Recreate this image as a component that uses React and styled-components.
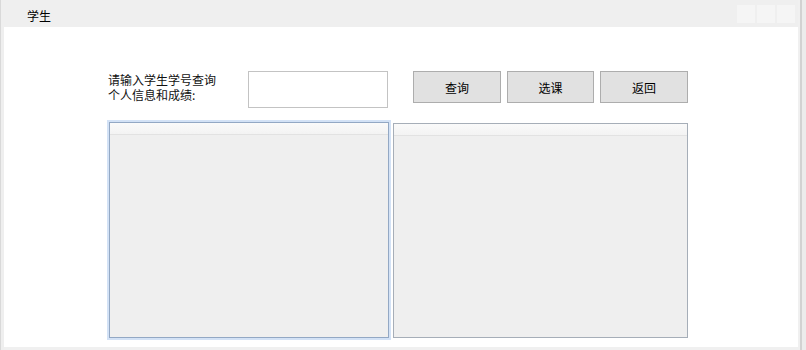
import React, { useState } from 'react';
import styled, { createGlobalStyle } from 'styled-components';

const GlobalStyle = createGlobalStyle`
  html, body {
    margin: 0;
    padding: 0;
    background: #f0f0f0;
    font-family: 'Noto Sans CJK SC', 'Noto Sans', sans-serif;
    font-size: 12px;
    color: #000;
  }
`;

const Window = styled.div`
  display: flex;
  width: 806px;
  height: 350px;
  overflow: hidden;
`;

const LeftEdge = styled.div`
  width: 4px;
  flex-shrink: 0;
  background: linear-gradient(to right, #d9d9d9 0 1px, #efefef 1px);
`;

const RightEdge = styled.div`
  width: 8px;
  flex-shrink: 0;
  background: linear-gradient(to right, #f0f0f0 0 2px, #d2d2d2 2px 4px, #ececec 4px);
`;

const Main = styled.div`
  flex: 1;
  display: flex;
  flex-direction: column;
`;

const TitleBar = styled.div`
  height: 27px;
  display: flex;
  align-items: flex-start;
  justify-content: space-between;
  background: #efefef;
  padding: 0 3px 0 23px;
`;

const Title = styled.span`
  padding-top: 7px;
  line-height: 17px;
  font-size: 12px;
`;

const Controls = styled.div`
  display: flex;
  gap: 2px;
  padding-top: 5px;
`;

const ControlBox = styled.div`
  width: 18px;
  height: 18px;
  background: #f5f5f5;
`;

const Content = styled.div`
  flex: 1;
  background: #fff;
  display: flex;
  flex-direction: column;
  padding: 44px 0 0 104px;
`;

const BottomEdge = styled.div`
  height: 3px;
  background: #f0f0f0;
`;

const TopRow = styled.div`
  display: flex;
  align-items: flex-start;
`;

const Label = styled.div`
  width: 140px;
  padding-top: 1px;
  line-height: 15px;
  font-size: 12px;
  color: #111;
`;

const TextBox = styled.input`
  box-sizing: border-box;
  width: 140px;
  height: 37px;
  border: 1px solid #c3c3c3;
  background: #fff;
  outline: none;
  margin: 0 25px 0 0;
  padding: 0 4px;
  font-family: inherit;
  font-size: 12px;
`;

const ButtonGroup = styled.div`
  display: flex;
  gap: 6px;
`;

const Button = styled.button`
  box-sizing: border-box;
  width: ${(p) => p.w || 88}px;
  height: 32px;
  margin: 0;
  padding: 0;
  background: #e1e1e1;
  border: 1px solid #adadad;
  font-family: inherit;
  font-size: 12px;
  color: #000;
`;

const Panels = styled.div`
  display: flex;
  align-items: flex-start;
  gap: 4px;
  margin-top: 14px;
  padding-left: 1px;
`;

const Panel = styled.div`
  box-sizing: border-box;
  width: ${(p) => p.w}px;
  height: ${(p) => p.h}px;
  margin-top: ${(p) => p.top || 0}px;
  background: #efefef;
  border: 1px solid ${(p) => (p.focused ? '#93a8c4' : '#a6aeb8')};
  box-shadow: ${(p) => (p.focused ? '0 0 0 2px #d3e2f6' : 'none')};
  display: flex;
  flex-direction: column;
`;

const PanelHeader = styled.div`
  height: 11px;
  background: linear-gradient(#fafafa, #f3f3f3);
  border-bottom: 1px solid #e2e2e2;
`;

export default function App() {
  const [id, setId] = useState('');

  return (
    <>
      <GlobalStyle />
      <Window>
        <LeftEdge />
        <Main>
          <TitleBar>
            <Title>学生</Title>
            <Controls>
              <ControlBox />
              <ControlBox />
              <ControlBox />
            </Controls>
          </TitleBar>
          <Content>
            <TopRow>
              <Label>
                请输入学生学号查询
                <br />
                个人信息和成绩:
              </Label>
              <TextBox value={id} onChange={(e) => setId(e.target.value)} />
              <ButtonGroup>
                <Button>查询</Button>
                <Button w={87}>选课</Button>
                <Button>返回</Button>
              </ButtonGroup>
            </TopRow>
            <Panels>
              <Panel focused w={280} h={216}>
                <PanelHeader />
              </Panel>
              <Panel w={295} h={215} top={1}>
                <PanelHeader />
              </Panel>
            </Panels>
          </Content>
          <BottomEdge />
        </Main>
        <RightEdge />
      </Window>
    </>
  );
}
